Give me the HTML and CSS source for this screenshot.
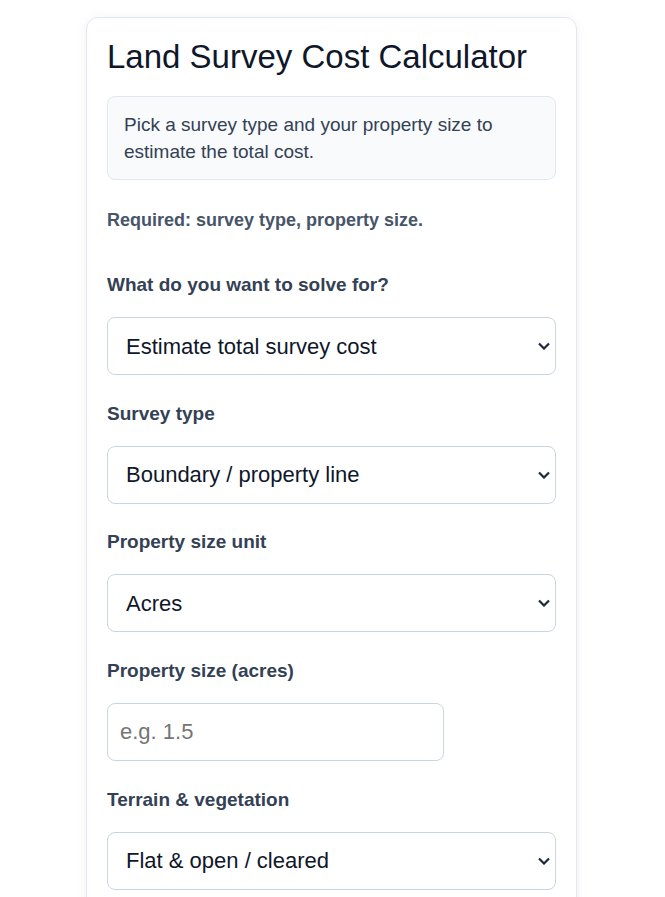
FILE: index.html
```html
<!DOCTYPE html>
<html lang="en">
<head>
    <meta charset="UTF-8">
    <meta name="viewport" content="width=device-width, initial-scale=1.0">
    <title>Land Survey Cost Calculator</title>
    <link rel="stylesheet" href="styles.css">
</head>
<body>
    <!-- calculator card -->
    <div class="card">
        <h1>Land Survey Cost Calculator</h1>

        <div class="intro">
            Pick a survey type and your property size to estimate the total cost.
        </div>

        <p class="required">Required: survey type, property size.</p>

        <div class="field">
            <label for="solveFor">What do you want to solve for?</label>
            <div class="select-wrap">
                <select id="solveFor">
                    <option>Estimate total survey cost</option>
                    <option>Find property size for a budget</option>
                </select>
                <svg class="chev" width="12" height="8" viewBox="0 0 12 8"><polyline points="1,1.5 6,6.5 11,1.5" /></svg>
            </div>
        </div>

        <div class="field">
            <label for="surveyType">Survey type</label>
            <div class="select-wrap">
                <select id="surveyType">
                    <option>Boundary / property line</option>
                    <option>Topographic</option>
                    <option>ALTA / NSPS</option>
                    <option>Mortgage / location</option>
                </select>
                <svg class="chev" width="12" height="8" viewBox="0 0 12 8"><polyline points="1,1.5 6,6.5 11,1.5" /></svg>
            </div>
        </div>

        <div class="field">
            <label for="sizeUnit">Property size unit</label>
            <div class="select-wrap">
                <select id="sizeUnit">
                    <option>Acres</option>
                    <option>Square feet</option>
                    <option>Hectares</option>
                </select>
                <svg class="chev" width="12" height="8" viewBox="0 0 12 8"><polyline points="1,1.5 6,6.5 11,1.5" /></svg>
            </div>
        </div>

        <div class="field">
            <label for="size">Property size (acres)</label>
            <input type="text" id="size" class="short" placeholder="e.g. 1.5">
        </div>

        <div class="field">
            <label for="terrain">Terrain &amp; vegetation</label>
            <div class="select-wrap">
                <select id="terrain">
                    <option>Flat &amp; open / cleared</option>
                    <option>Rolling / some trees</option>
                    <option>Steep / heavily wooded</option>
                </select>
                <svg class="chev" width="12" height="8" viewBox="0 0 12 8"><polyline points="1,1.5 6,6.5 11,1.5" /></svg>
            </div>
        </div>

        <div class="field">
            <label for="distance">Travel distance (miles)</label>
            <input type="text" id="distance" class="short" placeholder="e.g. 10">
        </div>

        <button class="calc">Calculate</button>
    </div>
</body>
</html>
```

FILE: styles.css
```css
body {
    margin: 0;
    padding-right: 2px;
    background: #fff;
    font-family: "Liberation Sans", Arial, sans-serif;
    color: #0f172a;
}

.card {
    box-sizing: border-box;
    width: 491px;
    margin: 17px auto;
    padding: 20px;
    border: 1px solid #e2e8f0;
    border-radius: 12px;
    background: #fff;
    box-shadow: 0 2px 12px rgba(15, 23, 42, 0.06);
}

h1 {
    margin: 0 0 20px;
    font-size: 33px;
    font-weight: 400;
    color: #0f172a;
}

.intro {
    padding: 14px 16px;
    border: 1px solid #e2e8f0;
    border-radius: 8px;
    background: #f8fafc;
    font-size: 19px;
    line-height: 27px;
    color: #334155;
}

.required {
    margin: 30px 0 43px;
    font-size: 18px;
    font-weight: 700;
    color: #475569;
}

.field {
    margin-bottom: 27.7px;
}

.field label {
    display: block;
    margin-bottom: 21px;
    font-size: 19px;
    font-weight: 700;
    color: #334155;
}

.select-wrap {
    position: relative;
}

.field select,
.field input {
    box-sizing: border-box;
    display: block;
    width: 100%;
    height: 58px;
    padding: 0 12px;
    border: 1px solid #cbd5e1;
    border-radius: 8px;
    background: #fff;
    font-family: inherit;
    font-size: 22px;
    color: #0f172a;
    outline: none;
}

.field select {
    appearance: none;
    -webkit-appearance: none;
    padding: 0 36px 0 18px;
}

/* the little arrow on the right of every select */
.chev {
    position: absolute;
    right: 6px;
    top: 50%;
    transform: translateY(-50%);
    fill: none;
    stroke: #1e293b;
    stroke-width: 2.2;
    pointer-events: none;
}

.field input.short {
    width: 75%;
}

.field input::placeholder {
    color: #757575;
}

.calc {
    padding: 14px 28px;
    border: 0;
    border-radius: 8px;
    background: #2563eb;
    color: #fff;
    font-family: inherit;
    font-size: 19px;
    font-weight: 700;
}
```
